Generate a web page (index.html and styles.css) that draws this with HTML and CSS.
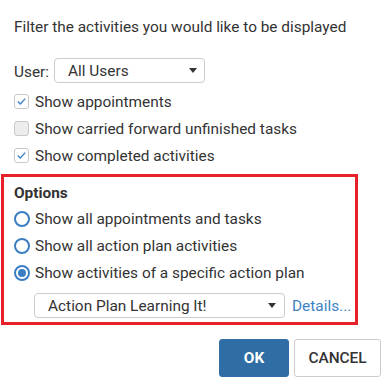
FILE: index.html
```html
<!DOCTYPE html>
<html>
<head>
<meta charset="utf-8">
<link rel="stylesheet" href="styles.css">
</head>
<body>
<div class="dialog">
  <p class="intro">Filter the activities you would like to be displayed</p>
  <div class="user-row">
    <span class="label">User:</span>
    <div class="select select-user"><span>All Users</span><span class="caret"></span></div>
  </div>
  <div class="checks">
    <div class="row"><span class="box checked"><svg viewBox="0 0 15 15" width="15" height="15"><path d="M3.8 7.6 L6.3 10 L11.2 4.6" fill="none" stroke="#3f84c8" stroke-width="1.4"/></svg></span><span>Show appointments</span></div>
    <div class="row"><span class="box"></span><span>Show carried forward unfinished tasks</span></div>
    <div class="row"><span class="box checked"><svg viewBox="0 0 15 15" width="15" height="15"><path d="M3.8 7.6 L6.3 10 L11.2 4.6" fill="none" stroke="#3f84c8" stroke-width="1.4"/></svg></span><span>Show completed activities</span></div>
  </div>
  <div class="options">
    <div class="options-title">Options</div>
    <div class="row"><span class="radio"></span><span>Show all appointments and tasks</span></div>
    <div class="row"><span class="radio"></span><span>Show all action plan activities</span></div>
    <div class="row"><span class="radio on"></span><span>Show activities of a specific action plan</span></div>
    <div class="plan-row">
      <div class="select select-plan"><span>Action Plan Learning It!</span><span class="caret"></span></div>
      <a class="details">Details...</a>
    </div>
  </div>
  <div class="buttons">
    <button class="btn btn-ok">OK</button>
    <button class="btn btn-cancel">CANCEL</button>
  </div>
</div>
</body>
</html>
```
FILE: styles.css
```css
html, body {
  margin: 0;
  padding: 0;
  background: #fff;
}
body {
  font-family: Roboto, "Liberation Sans", sans-serif;
  font-size: 15.4px;
  color: #333;
}
.dialog {
  width: 392px;
  height: 387px;
  display: flex;
  flex-direction: column;
}
.intro {
  margin: 17px 0 0 14px;
  line-height: 20px;
}
.user-row {
  margin: 21px 0 0 14px;
  display: flex;
  align-items: center;
  height: 25px;
}
.label {
  margin-right: 5px;
  padding-top: 3px;
}
.select {
  box-sizing: border-box;
  height: 25px;
  border: 1px solid #ccc;
  border-radius: 4px;
  display: flex;
  align-items: center;
  justify-content: space-between;
  background: #fff;
}
.select-user {
  width: 151px;
  padding: 0 7px 0 13px;
}
.select-plan {
  width: 251px;
  padding: 0 8px 0 13px;
}
.caret {
  width: 0;
  height: 0;
  border-left: 4px solid transparent;
  border-right: 4px solid transparent;
  border-top: 5px solid #333;
}
.checks {
  margin: 5px 0 0 14px;
}
.row {
  height: 27px;
  display: flex;
  align-items: center;
}
.box {
  box-sizing: border-box;
  width: 15px;
  height: 15px;
  border: 1px solid #c8c8c8;
  border-radius: 3px;
  background: #ececec;
  margin-right: 6px;
  position: relative;
}
.box.checked {
  background: #fff;
}
.box svg {
  position: absolute;
  left: -1px;
  top: -1px;
}
.options {
  margin: 5px 0 0 1px;
  width: 357px;
  box-sizing: border-box;
  border: 3px solid #e8202a;
  padding: 3px 0 4px 10px;
}
.options-title {
  font-weight: bold;
  line-height: 20px;
  height: 25px;
  padding-top: 3px;
  box-sizing: border-box;
}
.radio {
  box-sizing: border-box;
  width: 16px;
  height: 16px;
  border: 2px solid #3a7fc4;
  border-radius: 50%;
  margin-right: 5px;
  position: relative;
  background: #fff;
}
.radio.on::after {
  content: "";
  position: absolute;
  left: 2px;
  top: 2px;
  width: 8px;
  height: 8px;
  border-radius: 50%;
  background: #3a7fc4;
}
.plan-row {
  margin: 7px 0 0 20px;
  display: flex;
  align-items: center;
}
.details {
  margin-left: 7px;
  color: #3d82c4;
}
.buttons {
  margin: 14px 11px 0 0;
  display: flex;
  justify-content: flex-end;
  gap: 5px;
}
.btn {
  height: 38px;
  box-sizing: border-box;
  border-radius: 3px;
  font-family: Roboto, "Liberation Sans", sans-serif;
  font-size: 15.4px;
  padding: 0;
}
.btn-ok {
  width: 70px;
  background: #2f6da4;
  border: 1px solid #2f6da4;
  color: #fff;
  font-weight: bold;
}
.btn-cancel {
  width: 87px;
  background: #fff;
  border: 1px solid #ccc;
  color: #333;
  font-weight: 500;
}
```
